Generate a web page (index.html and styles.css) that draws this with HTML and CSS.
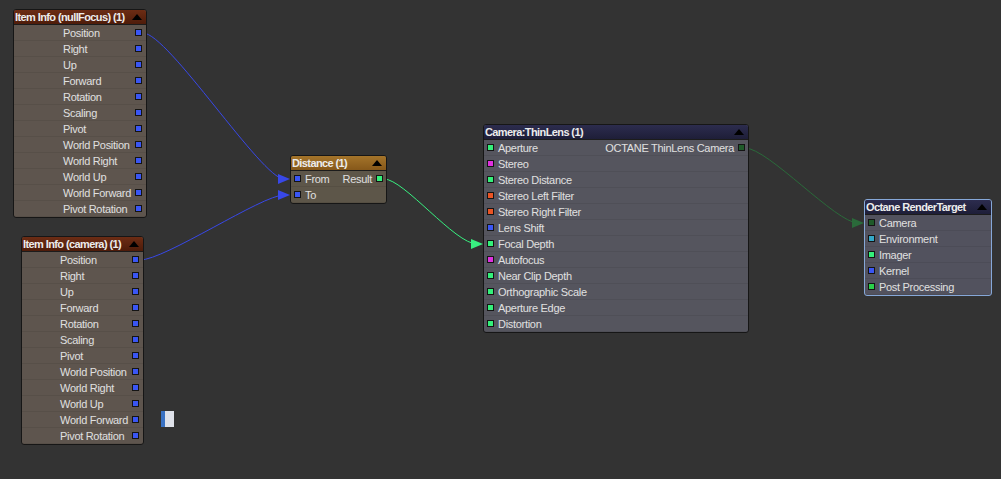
FILE: index.html
```html
<!DOCTYPE html>
<html>
<head>
<meta charset="utf-8">
<link rel="stylesheet" href="styles.css">
</head>
<body>
<div class="canvas">
  <svg class="wires" width="1001" height="479" viewBox="0 0 1001 479">
    <path d="M143,33 C168,33 262,179 284,179" stroke="#3848e8" class="wire"/>
    <polygon points="278,174 290,179 278,184" fill="#3848e8"/>
    <path d="M140,260 C165,260 262,195 284,195" stroke="#3848e8" class="wire"/>
    <polygon points="278,190 290,195 278,200" fill="#3848e8"/>
    <path d="M384,179 C404,179 455,244 477,244" stroke="#38f080" class="wire"/>
    <polygon points="471,239 483,244 471,249" fill="#38f080"/>
    <path d="M745,148 C768,148 836,223 858,223" stroke="#2a6a3a" class="wire"/>
    <polygon points="852,218 864,223 852,228" fill="#2a6a3a"/>
  </svg>

  <div class="node item item-null">
    <div class="head head-red"><span class="title">Item Info (nullFocus) (1)</span><span class="tri"></span></div>
    <div class="row"><span>Position</span><i class="port blue"></i></div>
    <div class="row"><span>Right</span><i class="port blue"></i></div>
    <div class="row"><span>Up</span><i class="port blue"></i></div>
    <div class="row"><span>Forward</span><i class="port blue"></i></div>
    <div class="row"><span>Rotation</span><i class="port blue"></i></div>
    <div class="row"><span>Scaling</span><i class="port blue"></i></div>
    <div class="row"><span>Pivot</span><i class="port blue"></i></div>
    <div class="row"><span>World Position</span><i class="port blue"></i></div>
    <div class="row"><span>World Right</span><i class="port blue"></i></div>
    <div class="row"><span>World Up</span><i class="port blue"></i></div>
    <div class="row"><span>World Forward</span><i class="port blue"></i></div>
    <div class="row"><span>Pivot Rotation</span><i class="port blue"></i></div>
  </div>

  <div class="node item item-cam">
    <div class="head head-red"><span class="title">Item Info (camera) (1)</span><span class="tri"></span></div>
    <div class="row"><span>Position</span><i class="port blue"></i></div>
    <div class="row"><span>Right</span><i class="port blue"></i></div>
    <div class="row"><span>Up</span><i class="port blue"></i></div>
    <div class="row"><span>Forward</span><i class="port blue"></i></div>
    <div class="row"><span>Rotation</span><i class="port blue"></i></div>
    <div class="row"><span>Scaling</span><i class="port blue"></i></div>
    <div class="row"><span>Pivot</span><i class="port blue"></i></div>
    <div class="row"><span>World Position</span><i class="port blue"></i></div>
    <div class="row"><span>World Right</span><i class="port blue"></i></div>
    <div class="row"><span>World Up</span><i class="port blue"></i></div>
    <div class="row"><span>World Forward</span><i class="port blue"></i></div>
    <div class="row"><span>Pivot Rotation</span><i class="port blue"></i></div>
  </div>

  <div class="node dist">
    <div class="head head-orange"><span class="title">Distance (1)</span><span class="tri"></span></div>
    <div class="row in"><i class="port blue"></i><span class="lbl">From</span><span class="out-lbl">Result</span><i class="port green"></i></div>
    <div class="row in"><i class="port blue"></i><span class="lbl">To</span></div>
  </div>

  <div class="node lens">
    <div class="head head-navy"><span class="title">Camera:ThinLens (1)</span><span class="tri"></span></div>
    <div class="row in"><i class="port green"></i><span class="lbl">Aperture</span><span class="out-lbl">OCTANE ThinLens Camera</span><i class="port dkgreen"></i></div>
    <div class="row in"><i class="port magenta"></i><span class="lbl">Stereo</span></div>
    <div class="row in"><i class="port green"></i><span class="lbl">Stereo Distance</span></div>
    <div class="row in"><i class="port red"></i><span class="lbl">Stereo Left Filter</span></div>
    <div class="row in"><i class="port red"></i><span class="lbl">Stereo Right Filter</span></div>
    <div class="row in"><i class="port blue"></i><span class="lbl">Lens Shift</span></div>
    <div class="row in"><i class="port green"></i><span class="lbl">Focal Depth</span></div>
    <div class="row in"><i class="port magenta"></i><span class="lbl">Autofocus</span></div>
    <div class="row in"><i class="port green"></i><span class="lbl">Near Clip Depth</span></div>
    <div class="row in"><i class="port green"></i><span class="lbl">Orthographic Scale</span></div>
    <div class="row in"><i class="port green"></i><span class="lbl">Aperture Edge</span></div>
    <div class="row in"><i class="port green"></i><span class="lbl">Distortion</span></div>
  </div>

  <div class="node target">
    <div class="head head-navy"><span class="title">Octane RenderTarget</span><span class="tri"></span></div>
    <div class="row in"><i class="port dkgreen"></i><span class="lbl">Camera</span></div>
    <div class="row in"><i class="port teal"></i><span class="lbl">Environment</span></div>
    <div class="row in"><i class="port green"></i><span class="lbl">Imager</span></div>
    <div class="row in"><i class="port blue"></i><span class="lbl">Kernel</span></div>
    <div class="row in"><i class="port green2"></i><span class="lbl">Post Processing</span></div>
  </div>

  <div class="marker"></div>
</div>
</body>
</html>
```

FILE: styles.css
```css
html, body {
  margin: 0;
  padding: 0;
  background: #333333;
}
.canvas {
  position: relative;
  width: 1001px;
  height: 479px;
  overflow: hidden;
  background: #333333;
  font-family: "Liberation Sans", Arial, sans-serif;
  font-size: 11px;
  letter-spacing: -0.3px;
  color: #e0e0e0;
}
.wires {
  position: absolute;
  left: 0;
  top: 0;
}
.wire {
  fill: none;
  stroke-width: 1;
}
.node {
  position: absolute;
  box-sizing: border-box;
  border: 1px solid #161616;
  border-radius: 3px;
  overflow: hidden;
  display: flex;
  flex-direction: column;
}
.head {
  height: 14px;
  flex: none;
  display: flex;
  align-items: center;
  justify-content: space-between;
  padding: 0 4px 0 1px;
  font-weight: bold;
  letter-spacing: -0.6px;
  color: #ececec;
  border-bottom: 1px solid #1c1c1c;
}
.title {
  white-space: nowrap;
}
.tri {
  width: 0;
  height: 0;
  border-left: 5px solid transparent;
  border-right: 5px solid transparent;
  border-bottom: 6px solid #000;
}
.head-red {
  background: linear-gradient(#6c2c14, #4e1c0a);
}
.head-orange {
  background: linear-gradient(#a4742a, #86581a);
}
.head-navy {
  background: linear-gradient(#2c2c4e, #1e1e38);
}
.row {
  height: 16px;
  flex: none;
  box-sizing: border-box;
  display: flex;
  align-items: center;
  white-space: nowrap;
  border-bottom: 1px solid rgba(0,0,0,0.07);
}
.port {
  display: block;
  width: 5px;
  height: 5px;
  border: 1px solid #141414;
  flex: none;
}
.blue { background: #3a56f4; }
.green { background: #34f07a; }
.green2 { background: #2ad04a; }
.dkgreen { background: #1f5a2a; }
.magenta { background: #e030e0; }
.red { background: #ea5424; }
.teal { background: #34a8c8; }

/* Item Info nodes */
.item {
  background: #5e554e;
}
.item .row {
  justify-content: space-between;
  padding-right: 4px;
}
.item-null {
  left: 13px;
  top: 9px;
  width: 134px;
}
.item-null .row span { padding-left: 49px; }
.item-cam {
  left: 21px;
  top: 236px;
  width: 123px;
}
.item-cam .row span { padding-left: 38px; }

/* input-style rows */
.row.in {
  padding-left: 3px;
  padding-right: 3px;
}
.lbl {
  margin-left: 4px;
  flex: 1;
}
.out-lbl {
  margin-right: 4px;
}

.dist {
  left: 290px;
  top: 155px;
  width: 97px;
  background: #5d5649;
}
.lens {
  left: 483px;
  top: 124px;
  width: 266px;
  background: #55555e;
}
.target {
  left: 864px;
  top: 199px;
  width: 128px;
  background: #52525e;
  border-color: #86a8d8;
}
.marker {
  position: absolute;
  left: 161px;
  top: 411px;
  width: 13px;
  height: 16px;
  box-sizing: border-box;
  background: linear-gradient(90deg, #3a72c4 0 4px, #dfe2ea 4px);
}
```
